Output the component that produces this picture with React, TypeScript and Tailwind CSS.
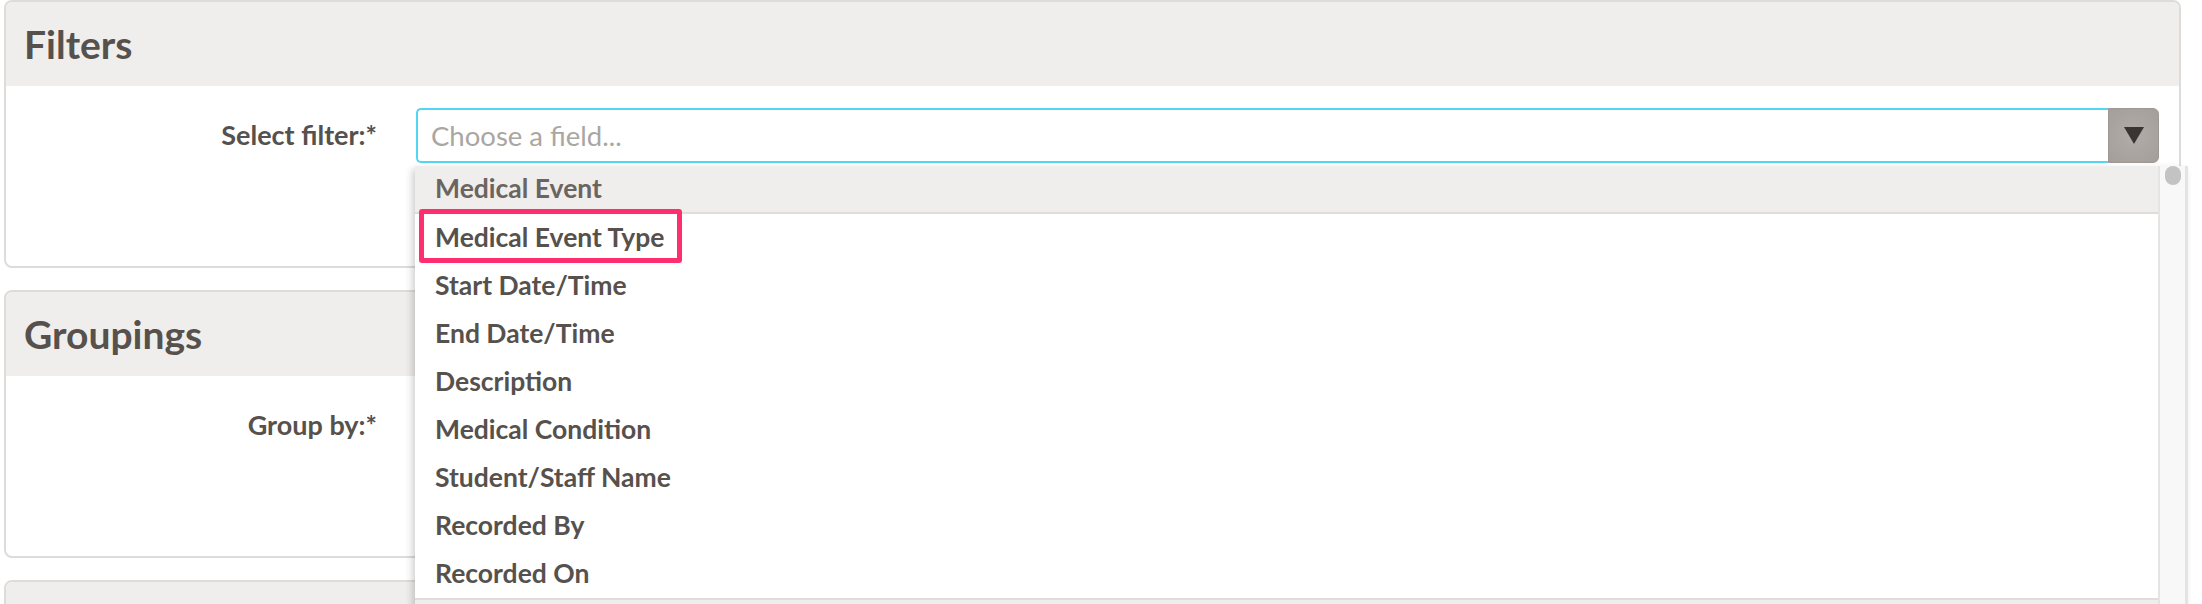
import React from "react";

const items = [
  "Medical Event Type",
  "Start Date/Time",
  "End Date/Time",
  "Description",
  "Medical Condition",
  "Student/Staff Name",
  "Recorded By",
  "Recorded On",
];

function Panel({ title, children }: { title: string; children?: React.ReactNode }) {
  return (
    <div className="ml-[4px] w-[2177px] shrink-0 rounded-[8px] border-2 border-[#dddcdb] bg-white">
      <div className="flex h-[84px] items-center rounded-t-[6px] bg-[#efeeec] pl-[18px]">
        <h2 className="text-[39px] font-bold text-[#56514d]">{title}</h2>
      </div>
      <div className="h-[180px] pt-[22px]">{children}</div>
    </div>
  );
}

function FieldRow({ label, children }: { label: string; children?: React.ReactNode }) {
  return (
    <div className="flex h-[55px] items-center pr-[20px]">
      <div className="w-[371px] shrink-0 text-right text-[27px] font-bold text-[#56514d]">{label}</div>
      <div className="ml-[39px] h-full flex-1">{children}</div>
    </div>
  );
}

function DropdownList() {
  return (
    <div className="absolute left-[-1px] right-[-29px] top-[58px] z-10 flex h-[460px] bg-white shadow-[-3px_3px_7px_rgba(0,0,0,0.18)]">
      <div className="relative flex-1">
        <div className="flex h-[48px] items-center border-b-2 border-[#dfdddb] bg-[#efeeec] pl-[20px] text-[26.5px] font-bold text-[#6b6460]">
          Medical Event
        </div>
        {items.map((it) => (
          <div key={it} className="flex h-[48px] items-center pl-[20px] text-[26.5px] font-bold text-[#56514d]">
            {it}
          </div>
        ))}
        <div className="h-[40px] border-t-2 border-[#dfdddb] bg-[#efeeec]" />
        <div className="absolute left-[4px] top-[43px] h-[54px] w-[263px] rounded-[3px] border-[5px] border-[#ff2e6e]" />
      </div>
      <div className="w-[30px] shrink-0 border-l-2 border-r-[3px] border-[#e4e4e4] bg-[#f8f8f8] pl-[5px]">
        <div className="h-[19px] w-[16px] rounded-full bg-[#c3c3c3]" />
      </div>
    </div>
  );
}

export default function App() {
  return (
    <div
      className="relative h-[604px] w-[2202px] overflow-hidden bg-white"
      style={{ fontFamily: "Lato, 'Open Sans', sans-serif" }}
    >
      <div className="flex flex-col gap-[22px]">
        <Panel title="Filters">
          <FieldRow label="Select filter:*">
            <div className="relative flex h-full">
              <div className="flex h-full flex-1 items-center rounded-l-[5px] border-2 border-r-0 border-[#52d6f1] pl-[13px] text-[27.5px] text-[#aaa6a2]">
                Choose a field...
              </div>
              <div className="flex h-full w-[51px] items-center justify-center rounded-r-[6px] border border-[#9d9894] bg-[radial-gradient(circle,#b1aca8_0%,#a39e9a_100%)]">
                <svg width="20" height="17" viewBox="0 0 20 17">
                  <polygon points="0,0 20,0 10,17" fill="#3a3532" />
                </svg>
              </div>
              <DropdownList />
            </div>
          </FieldRow>
        </Panel>
        <Panel title="Groupings">
          <FieldRow label="Group by:*" />
        </Panel>
        <Panel title="" />
      </div>
    </div>
  );
}
